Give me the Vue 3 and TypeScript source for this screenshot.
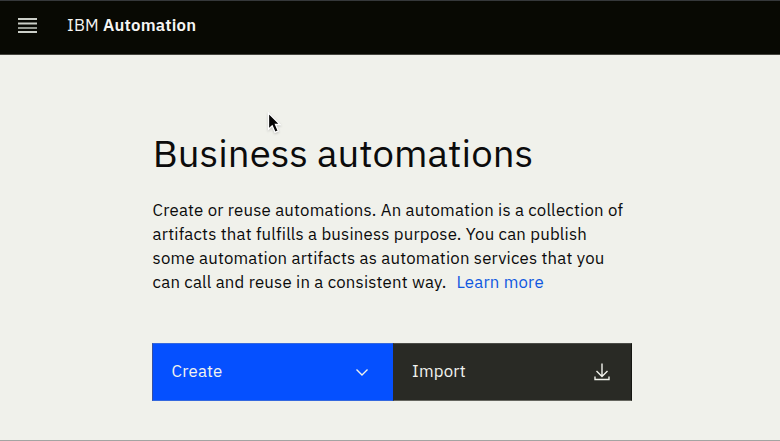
<script setup lang="ts">
const description: string[] = [
  'Create or reuse automations. An automation is a collection of',
  'artifacts that fulfills a business purpose. You can publish',
  'some automation artifacts as automation services that you',
]
</script>

<template>
  <div class="page">
    <header class="header">
      <button class="menu" type="button" aria-label="Menu">
        <svg width="20" height="16" viewBox="0 0 20 16">
          <path d="M0 1H19M0 5.500H19M0 14H19" />
          <path class="dim" d="M0 10H19" />
        </svg>
      </button>
      <div class="brand"><span class="brand-prefix">IBM</span> <strong class="brand-name">Automation</strong></div>
    </header>
    <main class="content">
      <h1 class="title">Business automations</h1>
      <p class="description">
        <span v-for="text in description" :key="text" class="line">{{ text }}</span>
        <span class="line">can call and reuse in a consistent way.<a class="link">Learn more</a></span>
      </p>
      <div class="actions">
        <button class="action primary" type="button">
          <span>Create</span>
          <svg width="20" height="20" viewBox="0 0 20 20" fill="none"><path d="M4.500 7.500 10 13 15.500 7.500" /></svg>
        </button>
        <button class="action secondary" type="button">
          <span>Import</span>
          <svg width="20" height="20" viewBox="0 0 20 20" fill="none"><path d="M10 1.500V14.300M4.500 9 10 14.500 15.500 9M3 14.500V17.500H17V14.500" /></svg>
        </button>
      </div>
    </main>
    <svg class="cursor" width="18" height="26" viewBox="0 0 18 26"><path d="M2.500 2V18.300L6.200 14.800 9 21.300 12.300 19.900 9.500 13.500H14Z" /></svg>
  </div>
</template>

<style>
body { margin: 0; }
</style>

<style scoped>
.page {
  position: relative;
  box-sizing: border-box;
  height: 441px;
  overflow: hidden;
  border-bottom: 1px solid #a3a4a2;
  background: #f0f1eb;
  color: #0b0b0b;
  font-family: "IBM Plex Sans", Roboto, sans-serif;
}
.header {
  box-sizing: border-box;
  display: flex;
  align-items: center;
  height: 55px;
  padding: 0 18px 5px;
  border-top: 1px solid #35383a;
  border-bottom: 1px solid #45453f;
  background: #080903;
  color: #f5f5f3;
}
.menu { display: flex; padding: 1px 0 0; border: 0; background: none; }
.menu path { stroke: #cbcfc8; stroke-width: 2; }
.menu .dim { stroke: #959991; }
.brand {
  margin-left: 29px;
  font-size: 16.800px;
  line-height: 24px;
  letter-spacing: 0.200px;
  white-space: pre;
}
.brand-prefix { font-weight: 400; }
.brand-name { font-weight: 600; }
.content { padding: 73px 0 0 152px; }
.title {
  margin: 0;
  padding-left: 0.700px;
  font-size: 38.400px;
  font-weight: 400;
  line-height: 50px;
}
.description {
  margin: 20px 0 0;
  padding-left: 0.600px;
  font-size: 16.800px;
  line-height: 24px;
  letter-spacing: 0.200px;
}
.line { display: block; white-space: nowrap; }
.link { margin-left: 10px; color: #0f58e0; }
.actions { display: flex; width: 480px; margin-top: 49px; }
.action {
  box-sizing: border-box;
  display: flex;
  align-items: center;
  justify-content: space-between;
  height: 58px;
  padding: 0 19px 2px 18px;
  border: 1px solid;
  color: #f2f3ef;
  font: inherit;
  font-size: 16.800px;
  letter-spacing: 0.200px;
}
.primary { width: 241px; padding-right: 20px; padding-left: 18.600px; border-color: #3468df #0550ff #3468df #3750a0; background: #0550ff; }
.secondary { width: 239px; border-color: #4b4c47 #151611 #65665f #292a25; background: #292a25; }
.action svg { position: relative; top: 1px; stroke: #f0f1eb; stroke-width: 1.400; }
.cursor { position: absolute; top: 111px; left: 266px; filter: drop-shadow(0 1px 1px #77777766); }
.cursor path { fill: #050505; stroke: #ffffff; stroke-width: 1.300; }
</style>
